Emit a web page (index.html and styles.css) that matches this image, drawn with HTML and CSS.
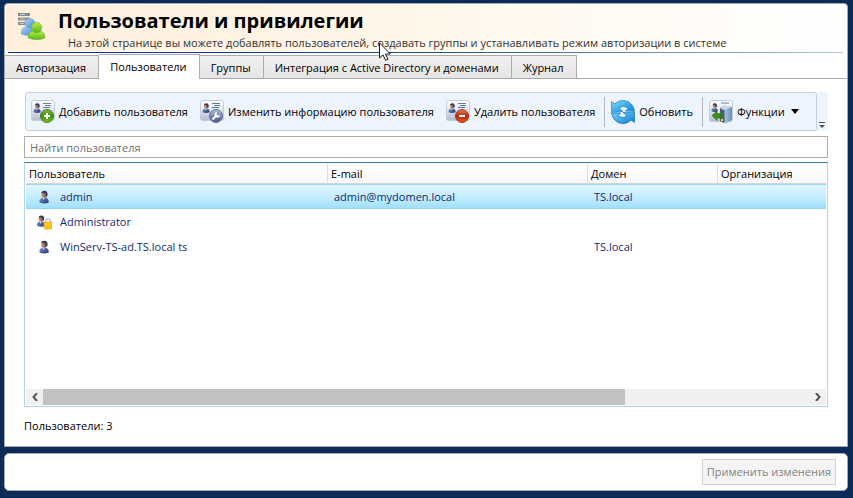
FILE: index.html
```html
<!DOCTYPE html>
<html lang="ru">
<head>
<meta charset="utf-8">
<title>Пользователи и привилегии</title>
<link rel="stylesheet" href="styles.css">
</head>
<body>
<svg class="defs" aria-hidden="true">
  <defs>
    <linearGradient id="card" x1="0" y1="0" x2="0" y2="1"><stop offset="0" stop-color="#ffffff"/><stop offset=".5" stop-color="#dfe5ee"/><stop offset="1" stop-color="#b3bccb"/></linearGradient>
    <linearGradient id="suit" x1="0" y1="0" x2="1" y2="1"><stop offset="0" stop-color="#7d9bd6"/><stop offset="1" stop-color="#1d3068"/></linearGradient>
    <linearGradient id="face" x1="0" y1="0" x2="1" y2="0"><stop offset="0" stop-color="#e0a07c"/><stop offset="1" stop-color="#5d3c3a"/></linearGradient>
    <linearGradient id="green" x1="0" y1="0" x2="0" y2="1"><stop offset="0" stop-color="#86b83c"/><stop offset=".5" stop-color="#3f8a12"/><stop offset="1" stop-color="#7cc51f"/></linearGradient>
    <linearGradient id="red" x1="0" y1="0" x2="0" y2="1"><stop offset="0" stop-color="#e98358"/><stop offset=".5" stop-color="#b82408"/><stop offset="1" stop-color="#ee5a14"/></linearGradient>
    <linearGradient id="steel" x1="0" y1="0" x2="0" y2="1"><stop offset="0" stop-color="#b4c0d8"/><stop offset="1" stop-color="#435380"/></linearGradient>
    <linearGradient id="blue" x1="0" y1="0" x2="1" y2="1"><stop offset="0" stop-color="#7edcff"/><stop offset="1" stop-color="#1076cc"/></linearGradient>
    <linearGradient id="sky" x1="0" y1="0" x2="1" y2="1"><stop offset="0" stop-color="#a9d4f6"/><stop offset="1" stop-color="#4287cd"/></linearGradient>
    <linearGradient id="lime" x1="0" y1="0" x2="0" y2="1"><stop offset="0" stop-color="#b9ec4a"/><stop offset="1" stop-color="#58b51e"/></linearGradient>
    <linearGradient id="server" x1="0" y1="0" x2="1" y2="0"><stop offset="0" stop-color="#49657f"/><stop offset=".4" stop-color="#a7c3dd"/><stop offset="1" stop-color="#6b8fb3"/></linearGradient>
    <symbol id="user" viewBox="0 0 16 16">
      <path d="M3.500 13.500Q3 9.500 6.500 8.500H9.500Q13 9.500 12.800 13.500Q8 15.500 3.500 13.500Z" fill="url(#suit)"/>
      <path d="M6.500 8.500H8.500L7.500 11Z" fill="#eef2fa"/>
      <circle cx="8.200" cy="5.400" r="3.100" fill="url(#face)"/>
      <path d="M5.200 4Q5.800 1.700 8.500 1.800Q12 2 11.400 6.500L10.500 8Q10.300 4 7.500 4Z" fill="#333a58"/>
    </symbol>
    <symbol id="idcard" viewBox="0 0 24 24">
      <rect x=".5" y=".5" width="23" height="20" rx="2" fill="url(#card)" stroke="#c4ccd9"/>
      <path d="M12 3.500H20M14 5.500H20M12 7.500H19" stroke="#587da9" stroke-width="1"/>
      <use href="#user" x="0" y="2" width="12" height="12"/>
    </symbol>
  </defs>
</svg>

<main class="panel">
  <header class="heading">
    <svg class="heading-icon" viewBox="0 0 28 28" aria-hidden="true">
      <path d="M0 0H12V3H0ZM0 4.500H12V7.500H0ZM0 9H8V12H0Z" fill="#858c94"/>
      <path d="M2 1.500H7M2 6H7M2 10.500H6" stroke="#c6cbd0"/>
      <path d="M3 21Q3 14.500 8 13.500H15Q18 15 18 21Q10 24 3 21Z" fill="url(#sky)" stroke="#72a8da" stroke-width=".5"/>
      <circle cx="12" cy="10.500" r="5" fill="url(#sky)" stroke="#72a8da" stroke-width=".5"/>
      <path d="M10 25Q10 18.500 15 18H22Q27 18.500 27 25Q19 28.500 10 25Z" fill="url(#lime)" stroke="#67ad2a" stroke-width=".5"/>
      <circle cx="18.500" cy="14.500" r="5.300" fill="url(#lime)" stroke="#67ad2a" stroke-width=".5"/>
    </svg>
    <div>
      <h1>Пользователи и привилегии</h1>
      <p>На этой странице вы можете добавлять пользователей, создавать группы и устанавливать режим авторизации в системе</p>
    </div>
  </header>
  <div class="rule"></div>

  <nav class="tabs" role="tablist">
    <button class="tab" role="tab">Авторизация</button>
    <button class="tab active" role="tab" aria-selected="true">Пользователи</button>
    <button class="tab" role="tab">Группы</button>
    <button class="tab" role="tab">Интеграция с Active Directory и доменами</button>
    <button class="tab" role="tab">Журнал</button>
  </nav>

  <section class="content">
    <div class="toolbar">
      <div class="tools">
        <button class="tool">
          <svg class="icon" viewBox="0 0 24 24" aria-hidden="true"><use href="#idcard"/><circle cx="16" cy="16" r="6.500" fill="url(#green)" stroke="#4b8123"/><path d="M16 13V19M13 16H19" stroke="#fff" stroke-width="2"/></svg>
          Добавить пользователя
        </button>
        <button class="tool">
          <svg class="icon" viewBox="0 0 24 24" aria-hidden="true"><use href="#idcard"/><circle cx="16" cy="16" r="6.500" fill="url(#steel)" stroke="#65759c"/><path d="M12.500 19.500L16.500 15.500" stroke="#fff" stroke-width="2"/><path d="M17 12L16.500 14.500L18 15.800L20 15Q20 18 17 17.500Q14 17 14.500 14Q15 12 17 12Z" fill="#fff"/></svg>
          Изменить информацию пользователя
        </button>
        <button class="tool">
          <svg class="icon" viewBox="0 0 24 24" aria-hidden="true"><use href="#idcard"/><circle cx="16" cy="16" r="6.500" fill="url(#red)" stroke="#a83b1c"/><path d="M13 16H19" stroke="#fff" stroke-width="2"/></svg>
          Удалить пользователя
        </button>
        <span class="divider"></span>
        <button class="tool">
          <svg class="icon" viewBox="0 0 24 24" aria-hidden="true"><path d="M.5 1.500L4 4Q9 -1.500 17 1.500Q22 4 23.500 10.500L14.500 11L17 8.500Q15 6.500 12.500 6.500Q10 6.500 8.500 8.500L12 11.500L.500 12.500Z" fill="url(#blue)" stroke="#2492d3" stroke-width=".8"/><path d="M23.500 22.500L20 20Q15 25.500 7 22.500Q2 20 .500 13.500L9.500 13L7 15.500Q9 17.500 11.500 17.500Q14 17.500 15.500 15.500L12 12.500L23.500 11.500Z" fill="url(#blue)" stroke="#157dc3" stroke-width=".8"/></svg>
          Обновить
        </button>
        <span class="divider"></span>
        <button class="tool" aria-haspopup="menu">
          <svg class="icon" viewBox="0 0 24 24" aria-hidden="true"><rect x=".5" y=".5" width="23" height="21" rx="2" fill="url(#card)" stroke="#c4ccd9"/><path d="M12 3H20" stroke="#587da9"/><use href="#user" x="0" y="2" width="11" height="11"/><path d="M11 8L15 5.500L23 7V20L16 23.500L11 21Z" fill="url(#server)"/><path d="M11 9L15.500 10V23L11 21Z" fill="#4c6072"/><path d="M11 8L15 5.500L23 7L15.500 10Z" fill="#c5d9ea"/><path d="M13 19V21" stroke="#ffd43b" stroke-width="2"/><path d="M3 15.500L8 11V13.500H12V18H8V20.500Z" fill="#3e8f1a" stroke="#28680e" stroke-width=".6"/></svg>
          Функции
          <svg class="caret" viewBox="0 0 8 5" aria-hidden="true"><path d="M0 0H8L4 5Z"/></svg>
        </button>
      </div>
      <button class="overflow" aria-label="Параметры панели"><svg viewBox="0 0 6 6" aria-hidden="true"><path d="M0 0H6V1H0ZM0 3H6L3 6Z" fill="#555"/></svg></button>
    </div>

    <input class="search" type="text" placeholder="Найти пользователя" aria-label="Найти пользователя">

    <div class="list">
      <table>
        <colgroup><col class="col-user"><col class="col-mail"><col class="col-domain"><col></colgroup>
        <thead><tr><th>Пользователь</th><th>E-mail</th><th>Домен</th><th>Организация</th></tr></thead>
        <tbody>
          <tr class="selected"><td><span class="name"><svg class="avatar" aria-hidden="true"><use href="#user"/></svg>admin</span></td><td>admin@mydomen.local</td><td>TS.local</td><td></td></tr>
          <tr><td><span class="name"><svg class="avatar" viewBox="0 0 16 16" aria-hidden="true"><use href="#user" x="-2" y="0" width="14" height="14"/><path d="M9.500 9V7.500Q9.500 5 12 5T14.500 7.500V9" fill="none" stroke="#c6c9cc" stroke-width="1.500"/><rect x="8" y="8" width="8" height="7" rx="1" fill="#ffc61a" stroke="#e59c08" stroke-width=".6"/></svg>Administrator</span></td><td></td><td></td><td></td></tr>
          <tr><td><span class="name"><svg class="avatar" aria-hidden="true"><use href="#user"/></svg>WinServ-TS-ad.TS.local ts</span></td><td></td><td>TS.local</td><td></td></tr>
        </tbody>
      </table>
      <div class="scrollbar">
        <button class="arrow" aria-label="Влево"><svg viewBox="0 0 6 8" aria-hidden="true"><path d="M5 0L1.500 4L5 8"/></svg></button>
        <div class="track"><div class="thumb"></div></div>
        <button class="arrow" aria-label="Вправо"><svg viewBox="0 0 6 8" aria-hidden="true"><path d="M1 0L4.500 4L1 8"/></svg></button>
      </div>
    </div>
    <p class="count">Пользователи: 3</p>
  </section>
</main>

<footer class="actions"><button class="apply" disabled>Применить изменения</button></footer>

<svg class="cursor" viewBox="0 0 12 19" aria-hidden="true"><path d="M.5 .8V16L4 12.800L6.500 18.300L9 17.200L6.500 12H11.300Z" fill="#fff" stroke="#1c1c2c"/></svg>
</body>
</html>
```
FILE: styles.css
```css
* { box-sizing: border-box; }

body {
  margin: 0;
  min-height: 100vh;
  padding: 3px 5px 7px 4px;
  display: flex;
  flex-direction: column;
  gap: 6px;
  background: #0c2b57;
  color: #000;
  font: 11px/16px "Open Sans", "Noto Sans", sans-serif;
}

button, input { font: inherit; color: inherit; }
button { margin: 0; padding: 0; border: 0; background: none; white-space: nowrap; }
h1, p { margin: 0; }
.defs { position: absolute; width: 0; height: 0; }

.panel {
  flex: 1;
  display: flex;
  flex-direction: column;
  border: 1px solid #a5a9ae;
  border-radius: 4px 4px 0 0;
  background: #fff;
}

.heading {
  display: flex;
  gap: 12px;
  height: 46px;
  margin: 1px 1px 0;
  padding: 0 12px;
  background: linear-gradient(90deg, #ffefdb, #fff7ea 50%, #fff);
}
.heading-icon { width: 28px; height: 28px; margin-top: 8px; flex: none; }
.heading h1 { font-size: 20px; line-height: 32px; font-weight: 700; white-space: nowrap; }
.heading p { padding-left: 10px; line-height: 12px; color: #333; white-space: nowrap; }
.rule { height: 1px; margin: 1px 4px 0 3px; background: linear-gradient(90deg, #003580, #1a4b8f 50%, #b5c5da); }

.tabs { display: flex; align-items: flex-end; height: 26px; border-bottom: 1px solid #acacac; }
.tab {
  height: 23px;
  padding: 2px 12px 0 11px;
  border: 1px solid #acacac;
  border-width: 1px 1px 0 0;
  background: linear-gradient(#f1f1f1, #e4e4e4);
}
.tab.active { height: 25px; margin-bottom: -1px; padding-bottom: 3px; background: #fff; }

.content { flex: 1; display: flex; flex-direction: column; padding: 13px 19px 12px; }

.toolbar { display: flex; height: 39px; margin-left: 1px; background: #eef4fd; border-radius: 3px; }
.tools {
  flex: 1;
  display: flex;
  align-items: center;
  padding: 0 5px;
  border: 1px solid #c9d0d9;
  border-radius: 3px;
}
.tool { display: flex; align-items: center; gap: 4px; margin-right: 12px; }
.icon { width: 24px; height: 24px; }
.divider { width: 1px; height: 30px; margin: 0 6px 0 -3px; background: #b0b6be; }
.caret { width: 8px; height: 5px; margin-left: 2px; }
.overflow { width: 12px; display: flex; align-items: flex-end; justify-content: center; padding-bottom: 3px; }
.overflow svg { width: 6px; height: 6px; }

.search { height: 22px; margin-top: 5px; padding: 0 5px; border: 1px solid #abadb3; background: #fff; }
.search::placeholder { color: #707070; opacity: 1; }

.list {
  flex: 1;
  display: flex;
  flex-direction: column;
  justify-content: space-between;
  margin-top: 4px;
  padding: 1px;
  border: 1px solid #b5d3e8;
  border-top-color: #3d7bad;
}
table { width: 100%; table-layout: fixed; border-collapse: separate; border-spacing: 0; }
.col-user { width: 302px; }
.col-mail { width: 260px; }
.col-domain { width: 130px; }
th {
  height: 20px;
  padding: 0 2px 0 3px;
  border-right: 1px solid #dedfe1;
  border-bottom: 1px solid #d5d5d5;
  background: linear-gradient(#fff, #f7f8fa);
  text-align: left;
  font-weight: 400;
}
th:last-child { border-right: 0; }
td { height: 25px; padding: 0 6px; color: #122b6c; }
.selected td { background: linear-gradient(#e2f6ff, #c6edff 50%, #a1dffb); border: solid #98d7f4; border-width: 1px 0; }
.name { display: flex; align-items: center; gap: 8px; padding-left: 4px; }
.avatar { width: 16px; height: 16px; }

.scrollbar { display: flex; height: 16px; background: #f0f0f0; }
.arrow { width: 17px; display: flex; align-items: center; justify-content: center; }
.arrow svg { width: 6px; height: 8px; fill: none; stroke: #555; stroke-width: 2; }
.track { flex: 1; }
.thumb { width: 76%; height: 100%; background: #c1c1c1; }
.count { margin-top: 11px; }

.actions {
  display: flex;
  align-items: center;
  justify-content: flex-end;
  height: 38px;
  padding-right: 11px;
  border: 1px solid #a5a9ae;
  border-radius: 5px;
  background: #fff;
}
.apply { height: 26px; padding: 0 4px; border: 1px solid #d1d1d1; background: #f4f4f4; color: #838383; }

.cursor { position: absolute; left: 379px; top: 42px; width: 12px; height: 19px; }
```
